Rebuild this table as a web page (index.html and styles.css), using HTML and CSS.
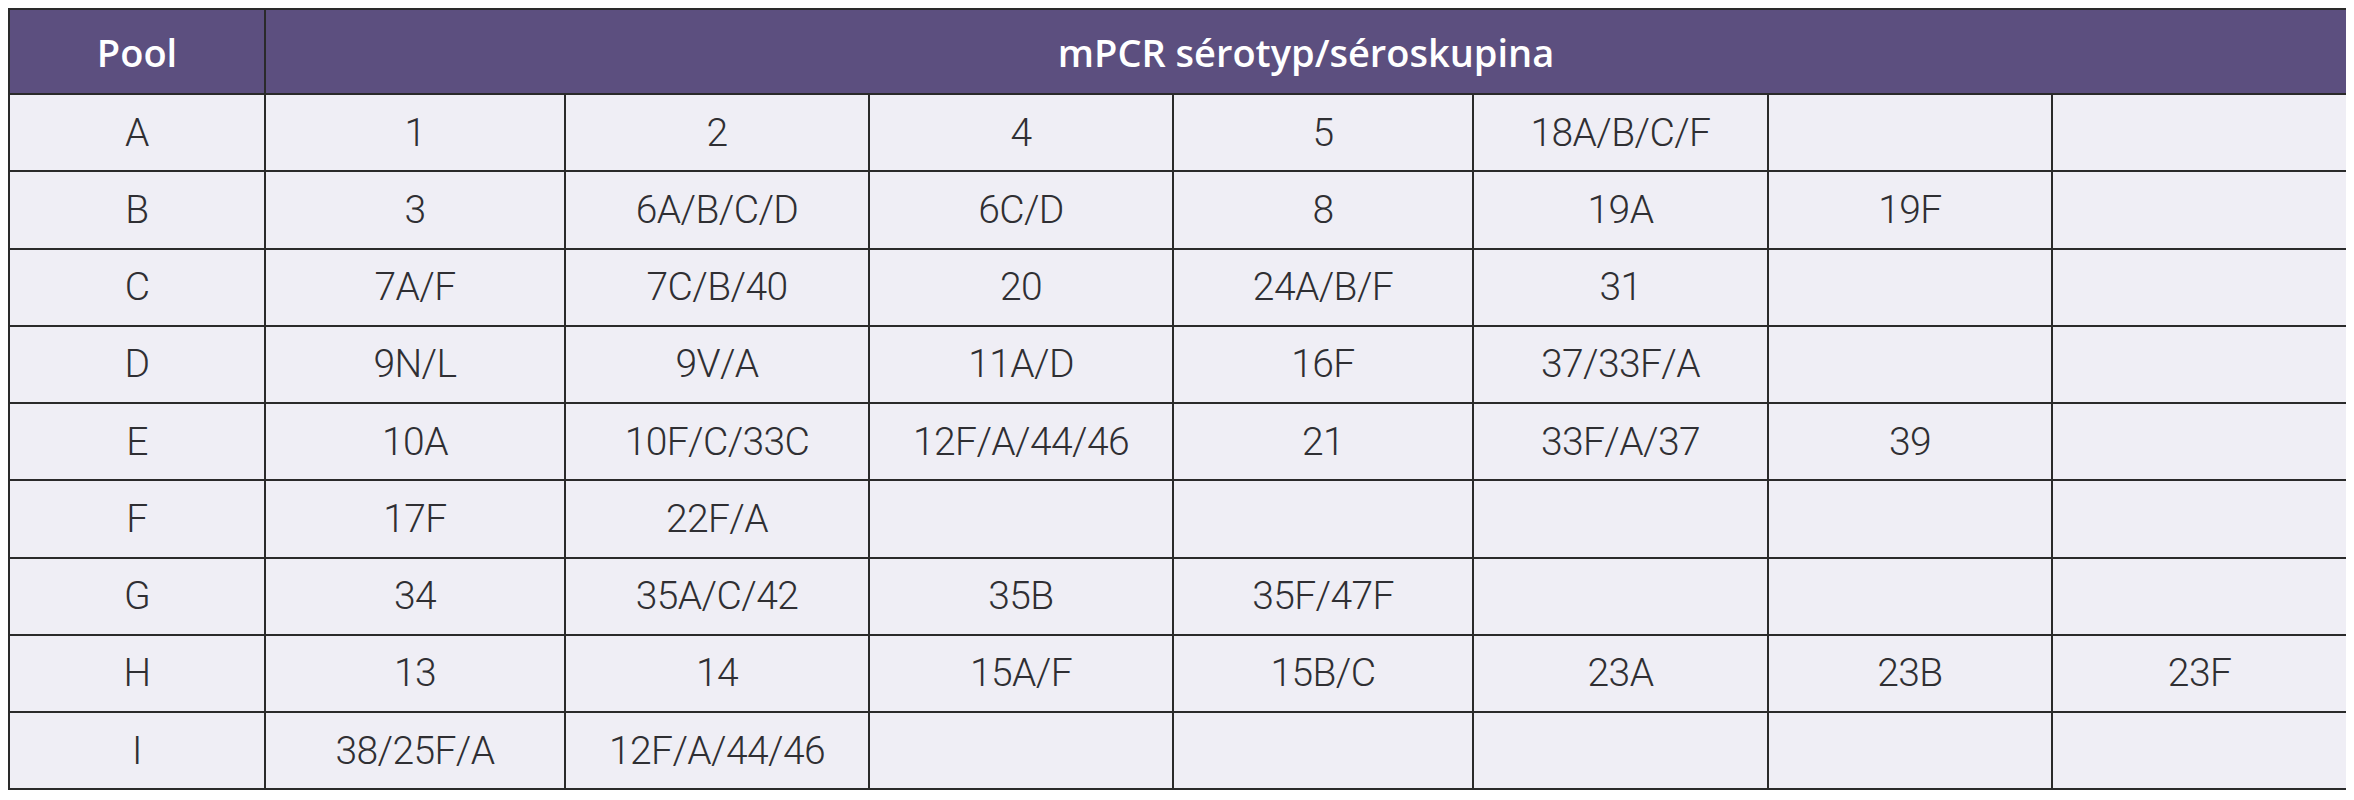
FILE: index.html
```html
<!DOCTYPE html>
<html lang="cs">
<head>
<meta charset="utf-8">
<title>mPCR sérotyp/séroskupina</title>
<link rel="stylesheet" href="styles.css">
</head>
<body>
<table class="pool-table">
  <colgroup>
    <col class="c-pool">
    <col class="c1">
    <col class="c2">
    <col class="c3">
    <col class="c4">
    <col class="c5">
    <col class="c6">
    <col class="c7">
  </colgroup>
  <thead>
    <tr class="head-row">
      <th>Pool</th>
      <th colspan="7">mPCR sérotyp/séroskupina</th>
    </tr>
  </thead>
  <tbody>
    <tr><td>A</td><td>1</td><td>2</td><td>4</td><td>5</td><td>18A/B/C/F</td><td></td><td></td></tr>
    <tr><td>B</td><td>3</td><td>6A/B/C/D</td><td>6C/D</td><td>8</td><td>19A</td><td>19F</td><td></td></tr>
    <tr><td>C</td><td>7A/F</td><td>7C/B/40</td><td>20</td><td>24A/B/F</td><td>31</td><td></td><td></td></tr>
    <tr><td>D</td><td>9N/L</td><td>9V/A</td><td>11A/D</td><td>16F</td><td>37/33F/A</td><td></td><td></td></tr>
    <tr><td>E</td><td>10A</td><td>10F/C/33C</td><td>12F/A/44/46</td><td>21</td><td>33F/A/37</td><td>39</td><td></td></tr>
    <tr><td>F</td><td>17F</td><td>22F/A</td><td></td><td></td><td></td><td></td><td></td></tr>
    <tr><td>G</td><td>34</td><td>35A/C/42</td><td>35B</td><td>35F/47F</td><td></td><td></td><td></td></tr>
    <tr><td>H</td><td>13</td><td>14</td><td>15A/F</td><td>15B/C</td><td>23A</td><td>23B</td><td>23F</td></tr>
    <tr><td>I</td><td>38/25F/A</td><td>12F/A/44/46</td><td></td><td></td><td></td><td></td><td></td></tr>
  </tbody>
</table>
</body>
</html>
```
FILE: styles.css
```css
html, body {
  background: #ffffff;
}
body {
  margin: 8px;
}
.pool-table {
  table-layout: fixed;
  width: 2338px;
  border-collapse: collapse;
  border: 2px solid #2a2a2a;
}
.c-pool { width: 256px; }
.c1 { width: 300px; }
.c2 { width: 304px; }
.c3 { width: 304px; }
.c4 { width: 300px; }
.c5 { width: 295px; }
.c6 { width: 284px; }
.c7 { width: 295px; }

.pool-table th,
.pool-table td {
  border: 2px solid #2a2a2a;
  text-align: center;
  vertical-align: middle;
  padding: 0;
}
.head-row {
  height: 85px;
}
.pool-table th {
  background: #5c4f7f;
  color: #ffffff;
  font-family: "Open Sans", "Noto Sans", sans-serif;
  font-weight: 600;
  font-size: 38px;
}
.pool-table tbody tr {
  height: 77.25px;
}
.pool-table td {
  background: #efeef5;
  color: #2f2f33;
  font-family: Roboto, "Noto Sans", sans-serif;
  font-weight: 300;
  font-size: 39px;
  letter-spacing: -0.6px;
}
```
